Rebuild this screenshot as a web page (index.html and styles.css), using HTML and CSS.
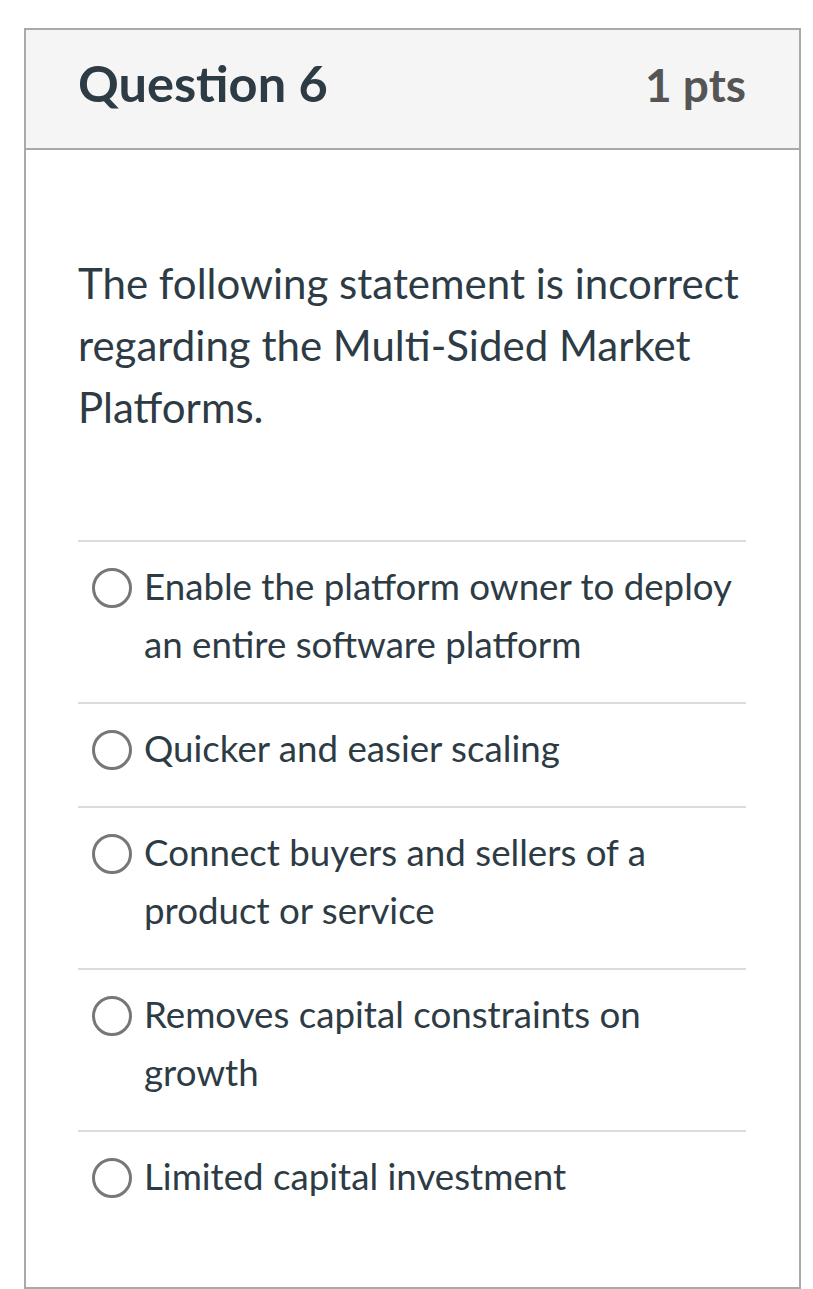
FILE: index.html
```html
<!DOCTYPE html>
<html>
<head>
<meta charset="utf-8">
<link rel="stylesheet" href="styles.css">
</head>
<body>
<div class="card">
  <div class="header">
    <div class="title">Question 6</div>
    <div class="pts">1 pts</div>
  </div>
  <div class="content">
    <p class="question">The following statement is incorrect regarding the Multi-Sided Market Platforms.</p>
    <div class="answers">
      <div class="answer"><span class="radio"></span><span class="label">Enable the platform owner to deploy an entire software platform</span></div>
      <div class="answer"><span class="radio"></span><span class="label">Quicker and easier scaling</span></div>
      <div class="answer"><span class="radio"></span><span class="label">Connect buyers and sellers of a product or service</span></div>
      <div class="answer"><span class="radio"></span><span class="label">Removes capital constraints on growth</span></div>
      <div class="answer"><span class="radio"></span><span class="label">Limited capital investment</span></div>
    </div>
  </div>
</div>
</body>
</html>
```

FILE: styles.css
```css
html, body {
  margin: 0;
  padding: 0;
  background: #fff;
}
body {
  font-family: Lato, "Noto Sans", sans-serif;
  color: #2d3b45;
}
.card {
  box-sizing: border-box;
  margin: 28px 0 0 24px;
  width: 777px;
  height: 1261px;
  border: 2px solid #a9a9a9;
}
.header {
  box-sizing: border-box;
  height: 120px;
  background: #f5f5f5;
  border-bottom: 2px solid #a9a9a9;
  display: flex;
  align-items: baseline;
  justify-content: space-between;
  padding: 23px 53px 0 52px;
}
.title {
  font-weight: 700;
  font-size: 50.5px;
  line-height: 60px;
  color: #2d3b45;
}
.pts {
  font-weight: 700;
  font-size: 46px;
  line-height: 60px;
  color: #555;
}
.content {
  padding: 102px 53px 0 52px;
}
.question {
  margin: 0;
  font-size: 42px;
  line-height: 62px;
}
.answers {
  margin-top: 102px;
}
.answer {
  display: flex;
  align-items: flex-start;
  gap: 12px;
  border-top: 2px solid #dcdcdc;
  padding: 15px 0 29px 14px;
  font-size: 36.7px;
  line-height: 58px;
}
.radio {
  flex: none;
  box-sizing: border-box;
  width: 40px;
  height: 40px;
  border: 3px solid #777;
  border-radius: 50%;
  margin-top: 11px;
}
```
